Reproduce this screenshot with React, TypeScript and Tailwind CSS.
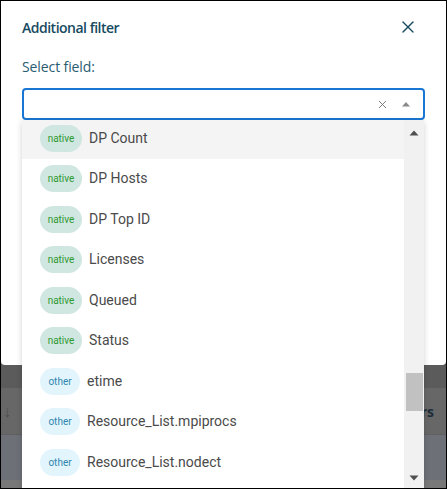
import { X } from 'lucide-react'

const fields = [
  { kind: 'native', label: 'DP Count' },
  { kind: 'native', label: 'DP Hosts' },
  { kind: 'native', label: 'DP Top ID' },
  { kind: 'native', label: 'Licenses' },
  { kind: 'native', label: 'Queued' },
  { kind: 'native', label: 'Status' },
  { kind: 'other', label: 'etime' },
  { kind: 'other', label: 'Resource_List.mpiprocs' },
  { kind: 'other', label: 'Resource_List.nodect' },
]

function Badge({ kind }: { kind: string }) {
  if (kind === 'native') {
    return (
      <span className="flex h-[27px] w-[42px] items-center justify-center rounded-full bg-[#d0e6e1] text-[10px] text-[#2f9a2f]">
        native
      </span>
    )
  }
  return (
    <span className="flex h-[27px] w-[40px] items-center justify-center rounded-full bg-[#e2f5fc] text-[10px] text-[#2f86b0]">
      other
    </span>
  )
}

export default function App() {
  return (
    <div className="relative h-[489px] w-[447px] overflow-hidden border border-black bg-[#6a6a6a] font-['Open_Sans',sans-serif]">
      {/* page behind the backdrop */}
      <div className="flex h-full flex-col">
        <div className="h-[363px] shrink-0" />
        <div className="h-[24px] shrink-0 bg-[#5b5b5b]" />
        <div className="flex h-[47px] shrink-0 items-center justify-between border-b border-[#606060] bg-[#676767] pl-[2px] pr-[12px]">
          <span className="text-[16px] text-[#4e4e4e]">↓</span>
          <span className="text-[14px] font-bold text-[#1d2d3a]">Filters</span>
        </div>
        <div className="h-[45px] shrink-0 bg-[#6d7077]" />
        <div className="flex-1 bg-[#787878]" />
      </div>

      {/* dialog */}
      <div className="absolute left-0 right-0 top-0 h-[364px] rounded-b-[4px] bg-white px-[21px] pt-4">
        <div className="flex h-5 items-center justify-between">
          <span className="text-[14px] font-semibold tracking-[-0.5px] text-[#164a5f]">Additional filter</span>
          <X className="mr-[7px] h-[20px] w-[20px] text-[#164a5f]" strokeWidth={1.6} />
        </div>
        <div className="mt-5 h-5 text-[14px] leading-5 tracking-[-0.1px] text-[#295d72]">Select field:</div>
        <div className="mt-[11px] flex h-[32px] items-center justify-end gap-[12px] rounded-[4px] border-2 border-[#1976d2] pr-[12px]">
          <X className="h-[13px] w-[13px] text-[#7a7a7a]" strokeWidth={1.8} />
          <svg width="10" height="6" viewBox="0 0 10 6" className="mb-[1px]">
            <path d="M1 5.5 L5 1 L9 5.5 Z" fill="#8a8a8a" />
          </svg>
        </div>
      </div>

      {/* dropdown list */}
      <div className="absolute left-[21px] top-[119px] flex h-[369px] w-[402px] bg-white font-['Roboto',sans-serif] shadow-[0_2px_6px_rgba(0,0,0,0.18)]">
        <div className="flex-1 overflow-hidden">
          <div className="mt-[-2px]">
            {fields.map((f, i) => (
              <div
                key={f.label}
                className={`flex h-[40.5px] items-center gap-[7px] pl-[18px] ${i === 0 ? 'bg-[#f4f4f4]' : ''}`}
              >
                <Badge kind={f.kind} />
                <span className="text-[14px] text-[#4a4a4a]">{f.label}</span>
              </div>
            ))}
          </div>
        </div>
        <div className="flex w-[20px] flex-col items-center bg-[#f1f1f1]">
          <svg width="10" height="6" viewBox="0 0 10 6" className="mt-[10px]">
            <path d="M0.5 5.5 L5 0.5 L9.5 5.5 Z" fill="#505050" />
          </svg>
          <div className="mt-[237px] h-[38px] w-[17px] bg-[#c1c1c1]" />
          <div className="flex-1" />
          <svg width="10" height="6" viewBox="0 0 10 6" className="mb-[8px]">
            <path d="M0.5 0.5 L5 5.5 L9.5 0.5 Z" fill="#505050" />
          </svg>
        </div>
      </div>
    </div>
  )
}
